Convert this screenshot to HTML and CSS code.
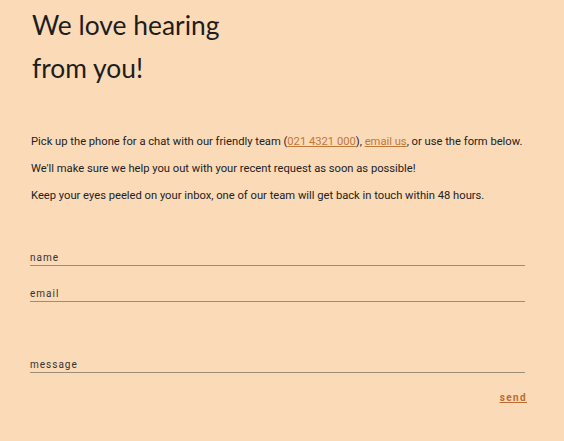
FILE: index.html
```html
<!DOCTYPE html>
<html>
<head>
<meta charset="utf-8">
<link rel="stylesheet" href="styles.css">
</head>
<body>
<main class="page">
  <h1 class="title">We love hearing<br>from you!</h1>
  <div class="intro">
    <p>Pick up the phone for a chat with our friendly team (<a href="#">021 4321 000</a>), <a href="#">email us</a>, or use the form below.</p>
    <p>We'll make sure we help you out with your recent request as soon as possible!</p>
    <p>Keep your eyes peeled on your inbox, one of our team will get back in touch within 48 hours.</p>
  </div>
  <form class="form">
    <label class="field"><span class="label">name</span></label>
    <label class="field"><span class="label">email</span></label>
    <label class="field field-message"><span class="label">message</span></label>
    <div class="actions"><a class="send" href="#">send</a></div>
  </form>
</main>
</body>
</html>
```
FILE: styles.css
```css
html, body {
  margin: 0;
  padding: 0;
  background: #fbdab8;
}
.page {
  padding: 4px 39px 0 30px;
  font-family: "Roboto", sans-serif;
  color: #222;
}
.title {
  margin: 0 0 0 2px;
  font-family: "Lato", sans-serif;
  font-weight: 400;
  font-size: 26.4px;
  line-height: 43px;
  color: #1d1d1d;
}
.intro {
  margin-top: 43.5px;
  margin-left: 1px;
  font-size: 11.2px;
}
.intro p {
  margin: 0 0 12px;
  line-height: 15px;
  white-space: nowrap;
}
.intro p:last-child {
  margin-bottom: 0;
}
.intro a {
  color: #c0783a;
}
.form {
  margin-top: 49.5px;
  display: flex;
  flex-direction: column;
}
.field {
  display: block;
  border-bottom: 1.5px solid #9c8c7a;
  padding-bottom: 1px;
  margin-bottom: 21.5px;
}
.field-message {
  margin-top: 36px;
  margin-bottom: 18.5px;
}
.label {
  display: block;
  font-size: 10px;
  line-height: 12px;
  letter-spacing: 1px;
  color: #333;
}
.actions {
  display: flex;
  justify-content: flex-end;
  line-height: 12px;
}
.send {
  margin-right: -2px;
  font-size: 10px;
  font-weight: 700;
  letter-spacing: 1.4px;
  color: #bb6d31;
}
```
